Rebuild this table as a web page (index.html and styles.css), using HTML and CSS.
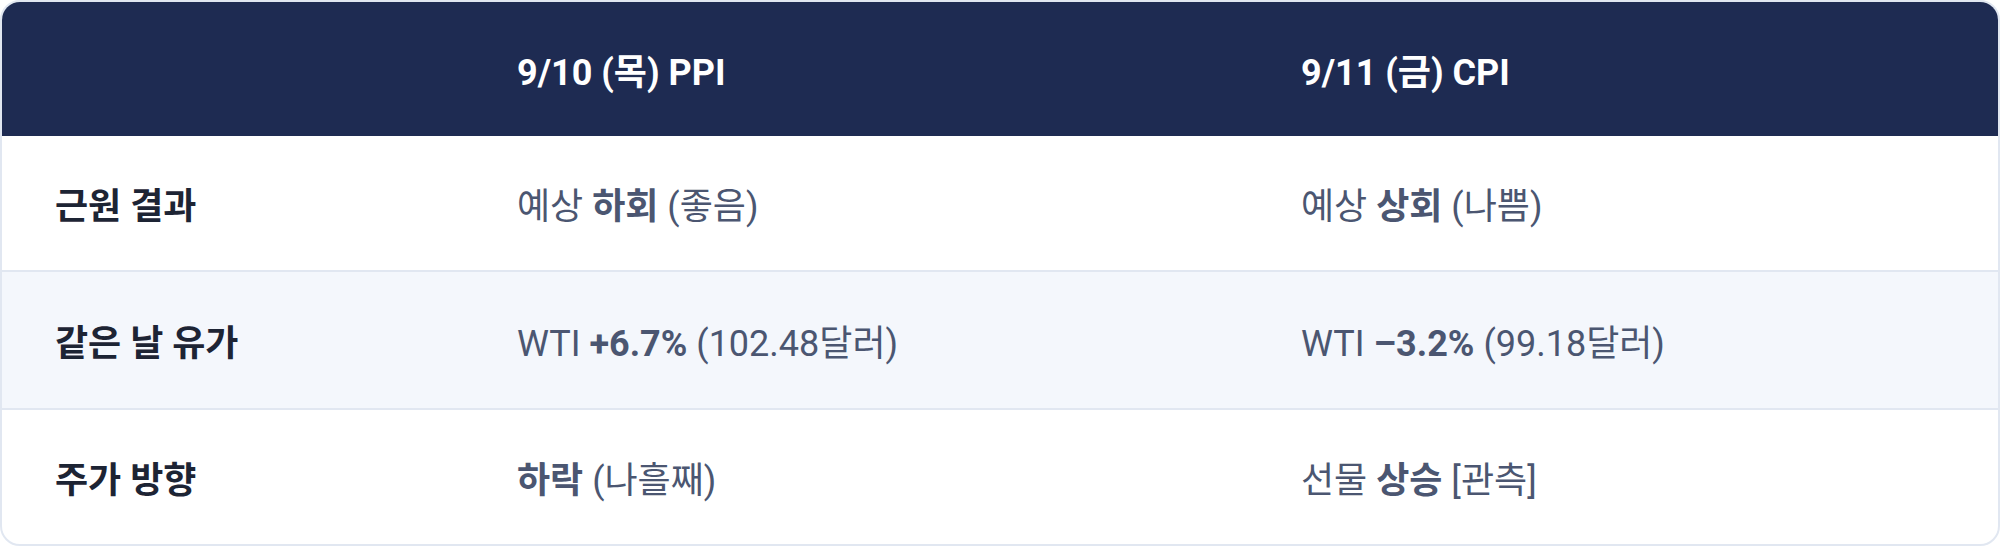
FILE: index.html
```html
<!DOCTYPE html>
<html lang="ko">
<head>
<meta charset="utf-8">
<title>PPI / CPI</title>
<link rel="stylesheet" href="styles.css">
</head>
<body>
<div class="card">
  <div class="row head">
    <div class="cell"></div>
    <div class="cell">9/10 (목) PPI</div>
    <div class="cell">9/11 (금) CPI</div>
  </div>
  <div class="row">
    <div class="cell label">근원 결과</div>
    <div class="cell val">예상 <b>하회</b> (좋음)</div>
    <div class="cell val">예상 <b>상회</b> (나쁨)</div>
  </div>
  <div class="row alt">
    <div class="cell label">같은 날 유가</div>
    <div class="cell val">WTI <b>+6.7%</b> (102.48달러)</div>
    <div class="cell val">WTI <b>–3.2%</b> (99.18달러)</div>
  </div>
  <div class="row last">
    <div class="cell label">주가 방향</div>
    <div class="cell val"><b>하락</b> (나흘째)</div>
    <div class="cell val">선물 <b>상승</b> [관측]</div>
  </div>
</div>
</body>
</html>
```

FILE: styles.css
```css
* { box-sizing: border-box; }
html, body { margin: 0; padding: 0; background: #ffffff; }
body {
  font-family: Roboto, "Noto Sans CJK KR", sans-serif;
  width: 2000px;
  height: 546px;
}
.card {
  width: 2000px;
  height: 546px;
  border: 2px solid #e1e7f1;
  border-radius: 20px;
  overflow: hidden;
  display: flex;
  flex-direction: column;
  background: #ffffff;
}
.row {
  display: grid;
  grid-template-columns: 462px 784px 1fr;
  align-items: center;
  height: 136px;
  border-bottom: 2px solid #e1e7f1;
}
.row.head {
  height: 134px;
  background: #1e2b52;
  color: #ffffff;
  font-weight: 700;
  font-size: 36px;
  border-bottom: none;
}
.row.alt { background: #f4f7fc; height: 138px; }
.row.last { border-bottom: none; flex: 1; height: auto; }
.cell {
  padding-left: 53px;
  white-space: nowrap;
}
.label {
  font-size: 36px;
  font-weight: 700;
  color: #1d2434;
}
.val {
  font-size: 36px;
  font-weight: 400;
  color: #4b5671;
}
.val b { font-weight: 700; }
```
